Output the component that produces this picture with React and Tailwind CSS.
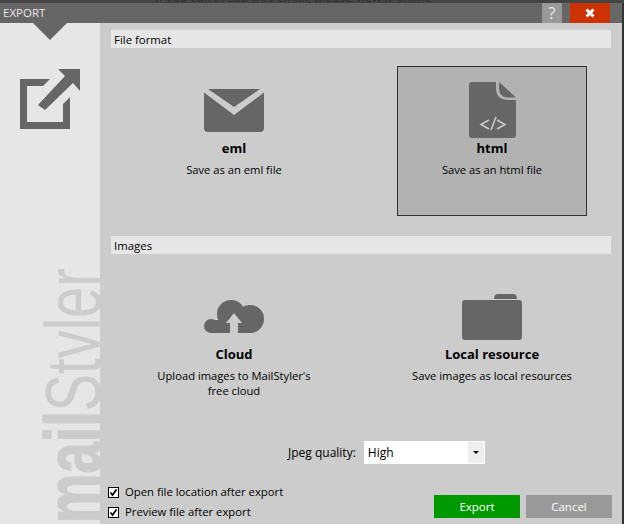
const font = { fontFamily: '"Open Sans", sans-serif' };

function Option({ icon, title, text, selected }) {
  return (
    <div className={`w-[190px] h-[150px] flex flex-col items-center text-center border ${selected ? "bg-[#b2b2b2] border-[#333333]" : "border-transparent"}`}>
      <div className="h-[71px] flex items-end justify-center shrink-0">{icon}</div>
      <div className="mt-px text-[13px] leading-[18px] font-bold text-black">{title}</div>
      <div className="mt-[5px] text-[11.2px] leading-[15px] text-black w-[170px]">{text}</div>
    </div>
  );
}

function Mail() {
  return (
    <svg className="mb-[6px]" width="60" height="43" viewBox="0 0 60 43">
      <path d="M4 0H56L30 18Z M0 3.5L30 26L60 3.5V39Q60 43 56 43H4Q0 43 0 39Z" fill="#666666" />
    </svg>
  );
}

function FileCode() {
  return (
    <svg width="47" height="56" viewBox="0 0 47 56">
      <path d="M3 0H27V6Q27 18 39 18H47V53Q47 56 44 56H3Q0 56 0 53V3Q0 0 3 0Z M30 0L47 15.5H39Q30 15.5 30 6Z" fill="#666666" />
      <path d="M20 38L12 42.5L20 47 M28 38L36 42.5L28 47 M27 35L22 48" fill="none" stroke="#cccccc" strokeWidth="1.5" />
    </svg>
  );
}

function Cloud() {
  return (
    <svg className="mb-[11px]" width="60" height="33" viewBox="0 0 60 33">
      <circle cx="7" cy="26" r="7" fill="#666666" />
      <circle cx="27" cy="14" r="14" fill="#666666" />
      <circle cx="46" cy="19" r="14" fill="#666666" />
      <rect x="7" y="20" width="40" height="13" fill="#666666" />
      <path d="M30 13L38 23H34V33H26V23H22Z" fill="#cccccc" />
    </svg>
  );
}

function Folder() {
  return (
    <svg className="mb-[4px]" width="60" height="46" viewBox="0 0 60 46">
      <path d="M32 5Q32 0 36 0H51Q55 0 55 5Z" fill="#666666" />
      <path d="M3 6H57Q60 6 60 9V43Q60 46 57 46H3Q0 46 0 43V9Q0 6 3 6Z" fill="#666666" />
    </svg>
  );
}

function Check({ label }) {
  return (
    <div className="flex items-center gap-[6px] h-5">
      <span className="w-[11px] h-[11px] border border-black bg-white flex items-center justify-center">
        <svg width="9" height="9" viewBox="0 0 9 9">
          <path d="M1.5 4.5L3.5 7L7.5 1.5" fill="none" stroke="#000000" strokeWidth="1.8" />
        </svg>
      </span>
      <span className="text-[11.3px]">{label}</span>
    </div>
  );
}

export default function App() {
  return (
    <div className="w-[624px] h-[524px] bg-[#333333] flex flex-col overflow-hidden text-[12px] text-black" style={font}>
      <div className="h-[3px] bg-[#444444] overflow-hidden flex items-end pl-[155px] shrink-0">
        <span className="text-[#303030] text-[12.5px] leading-[16px] -mb-[3px] whitespace-nowrap">If you can't read this email, please view it online</span>
      </div>
      <div className="flex flex-1 min-h-0 pr-[2px]">
        <div className="flex-1 flex flex-col bg-[#cccccc] min-w-0">
          <div className="h-[20px] bg-[#666666] flex items-center pl-[3px] shrink-0">
            <span className="text-[#e6e6e6] text-[11.5px]">EXPORT</span>
            <div className="flex-1"></div>
            <div className="w-5 h-5 bg-[#999999] text-[#e6e6e6] text-[17px] flex items-center justify-center">?</div>
            <div className="w-2"></div>
            <div className="w-10 h-5 bg-[#cc3300] flex items-center justify-center">
              <svg width="10" height="10" viewBox="0 0 10 10">
                <path d="M1.5 1.5L8.5 8.5M8.5 1.5L1.5 8.5" stroke="#ffffff" strokeWidth="3" />
              </svg>
            </div>
            <div className="w-3"></div>
          </div>
          <div className="flex flex-1 min-h-0">
            <div className="w-[100px] bg-[#e6e6e6] relative overflow-hidden shrink-0">
              <svg className="absolute left-[33px] top-0" width="34" height="17" viewBox="0 0 34 17">
                <path d="M0 0H34L17 17Z" fill="#666666" />
              </svg>
              <svg className="absolute left-[20px] top-[46px]" width="60" height="60" viewBox="0 0 60 60">
                <path d="M0 10H30L23 17H7V53H43V35L50 28V60H0Z" fill="#666666" />
                <path d="M38 0H60V22L53 14L25 41L18 36L45 7Z" fill="#666666" />
              </svg>
              <div className="absolute left-[34px] top-[195px] [writing-mode:vertical-rl] rotate-180 scale-y-[0.718] text-[#cccccc] text-[78px] leading-[78px] whitespace-nowrap" style={{ fontFamily: '"Liberation Sans", sans-serif' }}>
                <span className="font-bold [-webkit-text-stroke:1.5px_#cccccc]">mail</span>Styler
              </div>
            </div>
            <div className="flex-1 flex flex-col pl-[11px] pr-[11px] pt-[7px] min-w-0">
              <div className="h-[18px] bg-[#e6e6e6] flex items-center pl-[3px] pt-px text-[11.4px]">File format</div>
              <div className="flex mt-[18px] pl-[28px] pr-[24px] justify-between">
                <Option icon={<Mail />} title="eml" text="Save as an eml file" />
                <Option icon={<FileCode />} title="html" text="Save as an html file" selected />
              </div>
              <div className="h-[18px] bg-[#e6e6e6] flex items-center pl-[3px] pt-px mt-[20px] text-[11.4px]">Images</div>
              <div className="flex mt-[18px] pl-[28px] pr-[24px] justify-between">
                <Option icon={<Cloud />} title="Cloud" text="Upload images to MailStyler's free cloud" />
                <Option icon={<Folder />} title="Local resource" text="Save images as local resources" />
              </div>
              <div className="flex items-center h-[23px] mt-[19px] pl-[177px] gap-[8px]">
                <span>Jpeg quality:</span>
                <div className="w-[121px] h-[23px] bg-white flex items-center pl-[3px] border border-white">
                  <span className="flex-1">High</span>
                  <div className="w-4 h-full bg-[#eeeeee] flex items-center justify-center">
                    <div className="w-0 h-0 border-x-[3px] border-x-transparent border-t-[3px] border-t-black"></div>
                  </div>
                </div>
              </div>
              <div className="flex items-end justify-between mt-auto pb-[2px]">
                <div className="-ml-[3px]">
                  <Check label="Open file location after export" />
                  <Check label="Preview file after export" />
                </div>
                <div className="flex gap-[6px] pb-[4px] -mr-px text-[11.5px]">
                  <div className="w-[86px] h-[23px] bg-[#009900] text-white flex items-center justify-center">Export</div>
                  <div className="w-[86px] h-[23px] bg-[#999999] text-white flex items-center justify-center">Cancel</div>
                </div>
              </div>
            </div>
          </div>
        </div>
      </div>
    </div>
  );
}
